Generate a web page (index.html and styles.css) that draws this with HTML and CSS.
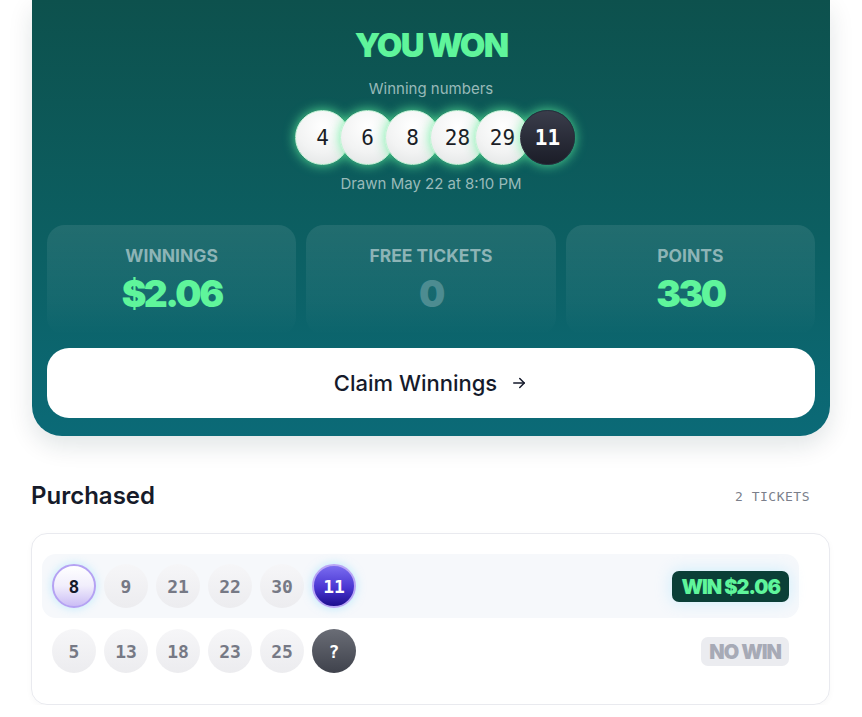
FILE: index.html
```html
<!DOCTYPE html>
<html lang="en">
<head>
  <meta charset="UTF-8" />
  <meta name="viewport" content="width=device-width, initial-scale=1.0" />
  <title>Draw Results</title>
  <link rel="stylesheet" href="styles.css">
</head>
<body>
  <div class="page">
    <!-- Result card -->
    <section class="result">
      <h1 class="result-title">YOU WON</h1>
      <div class="result-sub">Winning numbers</div>
      <div class="draw-balls">
        <span class="dball">4</span>
        <span class="dball">6</span>
        <span class="dball">8</span>
        <span class="dball">28</span>
        <span class="dball">29</span>
        <span class="dball dball-bonus">11</span>
      </div>
      <div class="result-sub drawn">Drawn May 22 at 8:10 PM</div>

      <div class="stats">
        <div class="stat">
          <div class="stat-label">WINNINGS</div>
          <div class="stat-value">$2.06</div>
        </div>
        <div class="stat">
          <div class="stat-label">FREE TICKETS</div>
          <div class="stat-value muted">0</div>
        </div>
        <div class="stat">
          <div class="stat-label">POINTS</div>
          <div class="stat-value">330</div>
        </div>
      </div>

      <button class="claim-btn" type="button">
        Claim Winnings
        <svg width="18" height="18" viewBox="0 0 24 24" fill="none" stroke="currentColor" stroke-width="2" stroke-linecap="round" stroke-linejoin="round"><path d="M5 12h14"/><path d="M13 6l6 6-6 6"/></svg>
      </button>
    </section>

    <!-- Purchased tickets -->
    <div class="section-head">
      <h2>Purchased</h2>
      <span class="count">2 TICKETS</span>
    </div>

    <div class="tickets">
      <div class="ticket ticket-win">
        <div class="balls">
          <span class="ball hit">8</span>
          <span class="ball">9</span>
          <span class="ball">21</span>
          <span class="ball">22</span>
          <span class="ball">30</span>
          <span class="ball bonus-hit">11</span>
        </div>
        <span class="badge badge-win">WIN $2.06</span>
      </div>
      <div class="ticket">
        <div class="balls">
          <span class="ball">5</span>
          <span class="ball">13</span>
          <span class="ball">18</span>
          <span class="ball">23</span>
          <span class="ball">25</span>
          <span class="ball bonus">?</span>
        </div>
        <span class="badge badge-none">NO WIN</span>
      </div>
    </div>
  </div>
</body>
</html>
```

FILE: styles.css
```css
* { box-sizing: border-box; }
body { margin: 0; background: #fff; font-family: Inter, "Noto Sans", sans-serif; color: #161b2a; }
.page { padding: 0 32px 0 31px; }

/* result card */
.result { margin-left: 1px; background: linear-gradient(180deg, #0d514d 0%, #0c5f62 55%, #0b6a77 100%); border-radius: 0 0 30px 30px; padding: 28px 15px 18px; text-align: center; box-shadow: 0 10px 24px rgba(10, 40, 50, 0.12); }
.result-title { margin: 0; font-size: 33px; font-weight: 900; line-height: 34px; letter-spacing: -1.8px; color: #5ff59b; }
.result-sub { margin-top: 18px; font-size: 15px; line-height: 18px; color: #98bab9; }
.drawn { margin-top: 10px; }
.draw-balls { display: flex; justify-content: center; margin-top: 12px; padding-left: 8px; }
.dball { width: 55px; height: 55px; border-radius: 50%; margin-left: -10px; display: flex; align-items: center; justify-content: center; background: radial-gradient(circle at 50% 30%, #ffffff 0%, #f2f3f3 55%, #dfe2e2 100%); border: 1px solid #bff5d3; box-shadow: 0 0 12px rgba(95, 245, 155, 0.85); font-family: "DejaVu Sans Mono", monospace; font-size: 21px; color: #1a1d26; }
.dball:first-child { margin-left: 0; }
.dball-bonus { background: linear-gradient(180deg, #3a3d4b 0%, #1b1d28 100%); color: #fff; border-color: #2a2d3a; font-weight: bold; }

.stats { display: grid; grid-template-columns: repeat(3, 1fr); gap: 10px; margin-top: 32px; }
.stat { height: 110px; border-radius: 18px; padding-top: 21px; background: linear-gradient(180deg, rgba(255,255,255,0.09) 0%, rgba(255,255,255,0.04) 70%, rgba(255,255,255,0) 100%); }
.stat-label { font-size: 17.5px; font-weight: 700; color: #8db4b6; line-height: 20px; }
.stat-value { margin-top: 8px; font-size: 37px; font-weight: 900; line-height: 40px; letter-spacing: -2.5px; color: #5ff59b; }
.stat-value.muted { color: #4d8c91; }

.claim-btn { display: flex; width: 100%; height: 70px; margin-top: 13px; align-items: center; justify-content: center; gap: 13px; border: none; border-radius: 22px; background: #fff; font-family: Inter, sans-serif; font-size: 22px; font-weight: 500; color: #151a2b; cursor: pointer; }

/* purchased */
.section-head { display: flex; justify-content: space-between; align-items: center; margin-top: 46px; padding-right: 20px; }
.section-head h2 { margin: 0; font-size: 24px; font-weight: 600; line-height: 28px; }
.count { font-family: "DejaVu Sans Mono", monospace; font-size: 13px; letter-spacing: 0.5px; color: #7b7f8b; }

.tickets { margin-top: 23px; border: 1px solid #e9eaef; border-radius: 16px; padding: 20px 30px 20px 10px; box-shadow: 0 2px 6px rgba(0,0,0,0.03); }
.ticket { display: flex; align-items: center; justify-content: space-between; height: 64px; padding: 0 10px; border-radius: 14px; }
.ticket + .ticket { height: 66px; }
.ticket-win { background: #f6f8fb; }
.balls { display: flex; gap: 8px; }
.ball { width: 44px; height: 44px; border-radius: 50%; display: flex; align-items: center; justify-content: center; background: linear-gradient(180deg, #f6f6f8 0%, #ececef 100%); font-family: "DejaVu Sans Mono", monospace; font-size: 18px; font-weight: bold; color: #767985; }
.ball.hit { background: linear-gradient(180deg, #ffffff 0%, #f1eefc 50%, #cbbdf5 100%); border: 2px solid #b4a2f3; color: #151a2b; box-shadow: 0 0 10px rgba(120, 220, 255, 0.45); }
.ball.bonus-hit { background: linear-gradient(180deg, #7a6cf0 0%, #4a36d2 55%, #1d0e8e 100%); border: 2px solid #b8a6f6; color: #fff; box-shadow: 0 0 10px rgba(120, 220, 255, 0.5); }
.ball.bonus { background: linear-gradient(180deg, #6a6d76 0%, #3f424c 100%); color: #fff; }

.badge { font-size: 20px; font-weight: 900; letter-spacing: -1px; line-height: 22px; border-radius: 7px; }
.badge-win { background: #0b3f37; color: #5ff59b; padding: 5px 9px 4px; box-shadow: 0 0 16px rgba(150, 225, 255, 0.45); }
.badge-none { background: #ebecf0; color: #a7aab6; padding: 4px 8px 3px; }
```
